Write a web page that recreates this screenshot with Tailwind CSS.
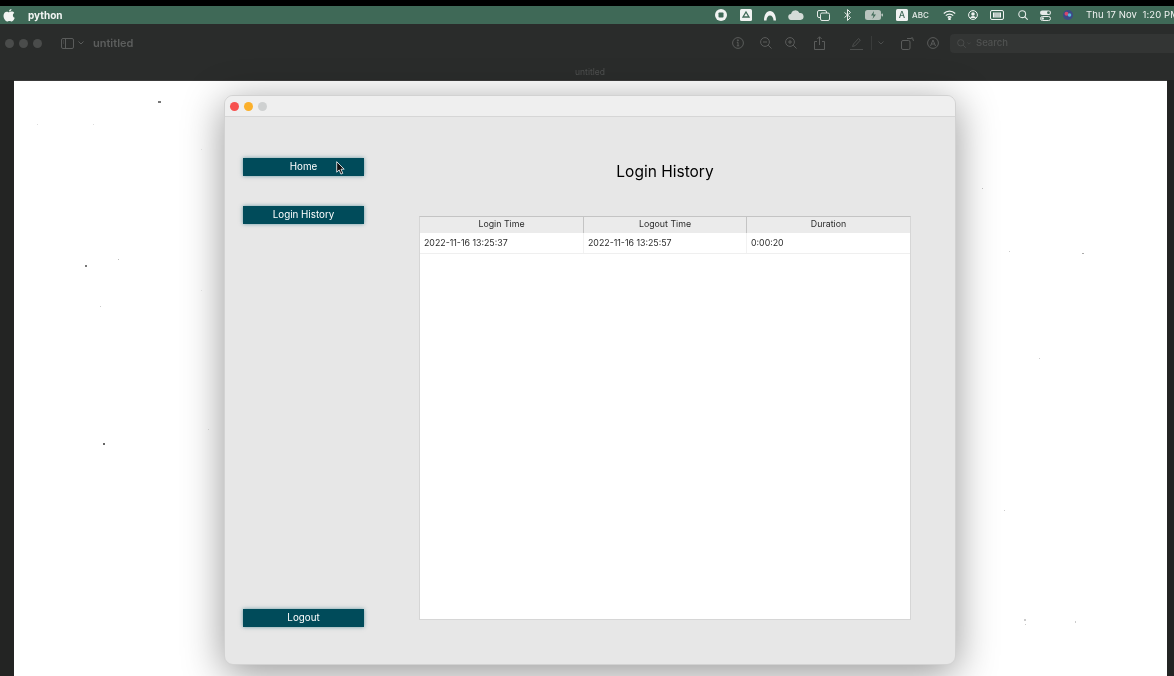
<!DOCTYPE html>
<html lang="en">
<head>
    <meta charset="UTF-8">
    <meta name="viewport" content="width=device-width, initial-scale=1.0">
    <title>Login History</title>
    <script src="https://cdn.jsdelivr.net/npm/@tailwindcss/browser@4"></script>
</head>
<body class="bg-black h-[676px] w-[1174px] overflow-hidden font-['Inter','Liberation_Sans',sans-serif]">
<div class="blur-[0.35px]">

    <!-- menu bar -->
    <div class="mt-[6px] h-[18px] bg-[#3f6957] flex items-center text-white relative">
        <svg class="w-[12px] h-[14px] ml-[3px]" viewBox="0 0 24 28" fill="#f2f5f3"><path d="M17 2c0 2.500-2 5-5 5 0-3 2-5 5-5zM12 8.500c1.500 0 3-1.300 5.500-1.300 2 0 4 1 5 2.800-4 2.300-3.300 8 1 9.700-1.200 3-3.500 7.300-6 7.300-1.800 0-2.300-1.200-4.500-1.200s-3 1.200-4.700 1.200C5 27 1 20.500 1 15.500 1 10.500 4.300 7.300 7.500 7.300c2 0 3.300 1.200 4.500 1.200z"/></svg>
        <span class="ml-[13px] text-[10px] font-bold text-[#f2f5f3]">python</span>

        <div class="flex items-center ml-auto h-full">
            <svg class="w-[12px] h-[12px]" viewBox="0 0 12 12"><circle cx="6" cy="6" r="6" fill="#f1f3f2"/><rect x="3.500" y="3.500" width="5" height="5" rx="0.800" fill="#3f6957"/></svg>
            <svg class="w-[12px] h-[12px] ml-[13px]" viewBox="0 0 12 12"><rect width="12" height="12" rx="1.500" fill="#f1f3f2"/><path d="M6 3l3 5H3z" fill="none" stroke="#3f6957" stroke-width="1.300"/></svg>
            <svg class="w-[14px] h-[11px] ml-[11px]" viewBox="0 0 14 11"><path d="M1 10.500C1 5 3.500 1 7 1s6 4 6 9.500h-2.500C10.500 7.500 9 5.500 7 5.500S3.500 7.500 3.500 10.500z" fill="#f1f3f2"/></svg>
            <svg class="w-[16px] h-[10px] ml-[11px]" viewBox="0 0 16 10"><path d="M3.500 10a3 3 0 0 1-.5-6 4.500 4.500 0 0 1 8.500-1A3.500 3.500 0 0 1 12.500 10z" fill="#d5dcd8"/></svg>
            <svg class="w-[13px] h-[11px] ml-[13px]" viewBox="0 0 13 11" fill="none" stroke="#e6ebe8" stroke-width="1"><rect x="0.500" y="0.500" width="9" height="7" rx="1.500"/><rect x="3.500" y="3" width="9" height="7.500" rx="1.500" fill="#3f6957"/></svg>
            <svg class="w-[7px] h-[12px] ml-[14px]" viewBox="0 0 7 12" fill="none" stroke="#e6ebe8" stroke-width="1"><path d="M0.500 3.500l6 5-3 3V0.500l3 3-6 5"/></svg>
            <svg class="w-[18px] h-[10px] ml-[14px]" viewBox="0 0 18 10"><rect x="0" y="0" width="16" height="10" rx="2.500" fill="#b9c4be"/><rect x="16.500" y="3.500" width="1.500" height="3" rx="0.700" fill="#b9c4be"/><path d="M9 1L6 5.500h2.500L7.500 9l3.500-4.500H8.500z" fill="#3f6957"/></svg>
            <span class="w-[12px] h-[12px] ml-[13px] bg-[#f1f3f2] rounded-[1.500px] text-[#3f6957] text-[9px] leading-[12px] text-center font-medium">A</span>
            <span class="ml-[4px] text-[8px] font-medium text-[#e6ebe8] w-[17px]">ABC</span>
            <svg class="w-[13px] h-[10px] ml-[14px]" viewBox="0 0 13 10" fill="none" stroke="#f1f3f2" stroke-width="1.300"><path d="M0.800 3.500a8 8 0 0 1 11.400 0M2.800 5.600a5.200 5.200 0 0 1 7.400 0M4.700 7.500a2.500 2.500 0 0 1 3.600 0"/><circle cx="6.500" cy="9" r="0.700" fill="#f1f3f2"/></svg>
            <svg class="w-[10px] h-[10px] ml-[12px]" viewBox="0 0 10 10"><circle cx="5" cy="5" r="4.400" fill="none" stroke="#f1f3f2"/><circle cx="5" cy="4" r="1.800" fill="#f1f3f2"/><path d="M2 8a3.200 3.200 0 0 1 6 0z" fill="#f1f3f2"/></svg>
            <svg class="w-[14px] h-[10px] ml-[12px]" viewBox="0 0 14 10"><rect x="0.500" y="0.500" width="13" height="9" rx="1.500" fill="none" stroke="#f1f3f2"/><path d="M3 2.500h8v5H3z" fill="#f1f3f2"/><path d="M5 2.500v5M7 2.500v5M9 2.500v5" stroke="#3f6957" stroke-width="0.600"/></svg>
            <svg class="w-[10px] h-[10px] ml-[14px]" viewBox="0 0 10 10" fill="none" stroke="#e6ebe8" stroke-width="1.100"><circle cx="4.200" cy="4.200" r="3.400"/><path d="M6.700 6.700l3 3"/></svg>
            <svg class="w-[11px] h-[11px] ml-[12px]" viewBox="0 0 11 11"><rect y="0.500" width="11" height="4.500" rx="2.200" fill="#e6ebe8"/><circle cx="8.500" cy="2.700" r="1.400" fill="#3f6957"/><rect x="0.500" y="6.500" width="10" height="4" rx="2" fill="none" stroke="#e6ebe8"/><circle cx="2.700" cy="8.500" r="1.300" fill="#e6ebe8"/></svg>
            <svg class="w-[10px] h-[10px] ml-[12px]" viewBox="0 0 10 10"><circle cx="5" cy="5" r="5" fill="#3c4a86"/><circle cx="3.500" cy="3.800" r="2" fill="#d4476d"/><circle cx="6.500" cy="5" r="1.800" fill="#56b9dc"/></svg>
            <span class="ml-[13px] text-[9.500px] tracking-[0.1px] text-[#f1f3f2] whitespace-nowrap w-[88px] overflow-hidden">Thu 17 Nov&nbsp;&nbsp;1:20 PM</span>
        </div>
    </div>

    <!-- preview toolbar -->
    <div class="h-[56px] bg-[#2a2c2b] relative">
        <div class="h-[38px] flex items-center text-[#5a5c5b]">
            <span class="w-[9px] h-[9px] rounded-full bg-[#4a4c4b] ml-[5px]"></span>
            <span class="w-[9px] h-[9px] rounded-full bg-[#4a4c4b] ml-[5px]"></span>
            <span class="w-[9px] h-[9px] rounded-full bg-[#4a4c4b] ml-[5px]"></span>
            <svg class="w-[13px] h-[11px] ml-[19px]" viewBox="0 0 13 11" fill="none" stroke="#5a5c5b"><rect x="0.500" y="0.500" width="12" height="10" rx="1.500"/><path d="M4.500 0.500v10"/><path d="M2 3h1M2 5h1" stroke-width="0.800"/></svg>
            <svg class="w-[6px] h-[4px] ml-[4px]" viewBox="0 0 6 4" fill="none" stroke="#5a5c5b"><path d="M0.500 0.500L3 3l2.500-2.500"/></svg>
            <span class="ml-[9px] text-[11px] font-semibold text-[#5c5e5d]">untitled</span>

            <div class="ml-auto flex items-center">
                <svg class="w-[12px] h-[12px]" viewBox="0 0 12 12" fill="none" stroke="#5a5c5b"><circle cx="6" cy="6" r="5.400"/><path d="M6 5.300v3.500M4.800 8.800h2.400M4.800 5.300H6"/><circle cx="5.900" cy="3.300" r="0.600" fill="#5a5c5b"/></svg>
                <svg class="w-[12px] h-[12px] ml-[16px]" viewBox="0 0 12 12" fill="none" stroke="#5a5c5b"><circle cx="5" cy="5" r="4.400"/><path d="M8.200 8.200l3.300 3.300M3 5h4"/></svg>
                <svg class="w-[12px] h-[12px] ml-[13px]" viewBox="0 0 12 12" fill="none" stroke="#5a5c5b"><circle cx="5" cy="5" r="4.400"/><path d="M8.200 8.200l3.300 3.300M3 5h4M5 3v4"/></svg>
                <svg class="w-[11px] h-[14px] ml-[17px]" viewBox="0 0 11 14" fill="none" stroke="#5a5c5b"><path d="M3 5.500H0.500v8h10v-8H8M5.500 9V0.800M3.300 3l2.200-2.200L7.700 3"/></svg>
                <svg class="w-[13px] h-[13px] ml-[25px]" viewBox="0 0 13 13" fill="none" stroke="#4c4e4d"><path d="M2.500 9.500L3.500 7l5-5.500 1.800 1.600-5 5.500z"/><path d="M0 12.500h13"/></svg>
                <span class="w-px h-[14px] bg-[#3a3c3b] ml-[8px]"></span>
                <svg class="w-[6px] h-[4px] ml-[6px]" viewBox="0 0 6 4" fill="none" stroke="#4c4e4d"><path d="M0.500 0.500L3 3l2.500-2.500"/></svg>
                <svg class="w-[13px] h-[14px] ml-[17px]" viewBox="0 0 13 14" fill="none" stroke="#5a5c5b"><rect x="0.500" y="4.500" width="8.500" height="9" rx="1.500"/><path d="M6 2.500h4.500q2 0 2 2.500M10.500 1L12 2.500"/></svg>
                <svg class="w-[12px] h-[12px] ml-[13px]" viewBox="0 0 12 12" fill="none" stroke="#5a5c5b"><circle cx="6" cy="6" r="5.400"/><path d="M3.500 9L6 3l2.500 6M4.500 7h3"/></svg>
                <div class="ml-[11px] w-[224px] h-[19px] bg-[#333534] rounded-l-[4px] flex items-center">
                    <svg class="w-[9px] h-[9px] ml-[7px]" viewBox="0 0 10 10" fill="none" stroke="#4c4e4d"><circle cx="4.200" cy="4.200" r="3.500"/><path d="M6.800 6.800l3 3"/></svg>
                    <svg class="w-[4px] h-[3px] ml-[1px]" viewBox="0 0 6 4" fill="none" stroke="#4c4e4d"><path d="M0.500 0.500L3 3l2.500-2.500"/></svg>
                    <span class="ml-[5px] text-[9.500px] text-[#505251] font-medium">Search</span>
                </div>
            </div>
        </div>
        <div class="text-center text-[8.500px] text-[#4f5150] mt-[4px] pl-[6px]">untitled</div>
    </div>

    <!-- document area -->
    <div class="h-[596px] bg-[#232423] pl-[14px] pr-[7px]">
        <div class="relative h-full bg-white border-t border-t-[#3a3a3a] pl-[210px] pt-[14px]">
            <!-- specks on the scanned page -->
            <span class="absolute left-[144px] top-[20px] w-[3px] h-[2px] bg-[#777]"></span>
            <span class="absolute left-[71px] top-[184px] w-[2px] h-[2px] bg-[#777]"></span>
            <span class="absolute left-[104px] top-[178px] w-px h-px bg-[#bbb]"></span>
            <span class="absolute left-[89px] top-[362px] w-[2px] h-[2px] bg-[#666]"></span>
            <span class="absolute left-[86px] top-[225px] w-px h-px bg-[#ccc]"></span>
            <span class="absolute left-[23px] top-[43px] w-px h-px bg-[#ddd]"></span>
            <span class="absolute left-[79px] top-[43px] w-px h-px bg-[#ddd]"></span>
            <span class="absolute left-[187px] top-[68px] w-px h-px bg-[#ddd]"></span>
            <span class="absolute left-[187px] top-[209px] w-px h-px bg-[#ddd]"></span>
            <span class="absolute left-[194px] top-[348px] w-px h-px bg-[#ccc]"></span>
            <span class="absolute left-[968px] top-[107px] w-px h-px bg-[#bbb]"></span>
            <span class="absolute left-[995px] top-[170px] w-px h-px bg-[#ccc]"></span>
            <span class="absolute left-[1068px] top-[172px] w-[2px] h-px bg-[#aaa]"></span>
            <span class="absolute left-[1025px] top-[277px] w-px h-px bg-[#ccc]"></span>
            <span class="absolute left-[1010px] top-[538px] w-[2px] h-[2px] bg-[#ccc]"></span>
            <span class="absolute left-[1011px] top-[543px] w-px h-px bg-[#ccc]"></span>
            <span class="absolute left-[1061px] top-[540px] w-px h-[2px] bg-[#ccc]"></span>
            <span class="absolute left-[990px] top-[429px] w-px h-px bg-[#ccc]"></span>

            <!-- python window -->
            <div class="w-[732px] h-[570px] bg-[#e7e7e7] rounded-[9px] border border-[#d2d2d2] shadow-[0_8px_40px_rgba(0,0,0,0.42)] overflow-hidden flex flex-col">
                <div class="h-[21px] shrink-0 bg-[#efefef] border-b border-[#d6d6d6] flex items-center pl-[5px] gap-[5px]">
                    <span class="w-[9px] h-[9px] rounded-full bg-[#f7514f]"></span>
                    <span class="w-[9px] h-[9px] rounded-full bg-[#fbb02c]"></span>
                    <span class="w-[9px] h-[9px] rounded-full bg-[#cfd1d1]"></span>
                </div>
                <div class="flex flex-1 min-h-0">
                    <div class="w-[194px] pl-[18px] pt-[41px] pb-[37px] flex flex-col">
                        <button class="relative w-[121px] h-[18px] pt-[1px] bg-[#004b5a] text-white text-[9.800px] shadow-[0_0_4px_rgba(0,90,110,0.55)]">
                            Home
                            <svg class="absolute left-[93px] top-[3px] w-[9px] h-[14px]" viewBox="0 0 9 14"><path d="M0.700 0.700v10.500l2.500-2.300 1.700 4.200 1.900-.8-1.800-4.100h3.200z" fill="#111" stroke="#fff" stroke-width="0.800"/></svg>
                        </button>
                        <button class="w-[121px] h-[18px] pt-[1px] mt-[30px] bg-[#004b5a] text-white text-[9.800px] shadow-[0_0_4px_rgba(0,90,110,0.55)]">Login History</button>
                        <button class="w-[121px] h-[18px] pt-[1px] mt-auto bg-[#004b5a] text-white text-[9.800px] shadow-[0_0_4px_rgba(0,90,110,0.55)]">Logout</button>
                    </div>
                    <div class="w-[492px] flex flex-col">
                        <h1 class="h-[99px] shrink-0 pt-[44px] text-center text-[15.500px] leading-[22px] text-black">Login History</h1>
                        <div class="h-[404px] bg-white border border-[#d6d6d6] border-t-[#c4c4c4] text-[8.800px] text-[#2b2b2b]">
                            <div class="grid grid-cols-[164px_163px_1fr] h-[16px] bg-[#ebebeb] leading-[13px] text-center">
                                <div class="h-[16px] border-r border-[#c4c4c4]">Login Time</div>
                                <div class="h-[16px] border-r border-[#c4c4c4]">Logout Time</div>
                                <div>Duration</div>
                            </div>
                            <div class="grid grid-cols-[164px_163px_1fr] h-[21px] border-b border-[#efefef] leading-[20px]">
                                <div class="pl-[4px] border-r border-[#f2f2f2]">2022-11-16 13:25:37</div>
                                <div class="pl-[4px] border-r border-[#f2f2f2]">2022-11-16 13:25:57</div>
                                <div class="pl-[4px]">0:00:20</div>
                            </div>
                        </div>
                    </div>
                </div>
            </div>
        </div>
    </div>
</div>
</body>
</html>
